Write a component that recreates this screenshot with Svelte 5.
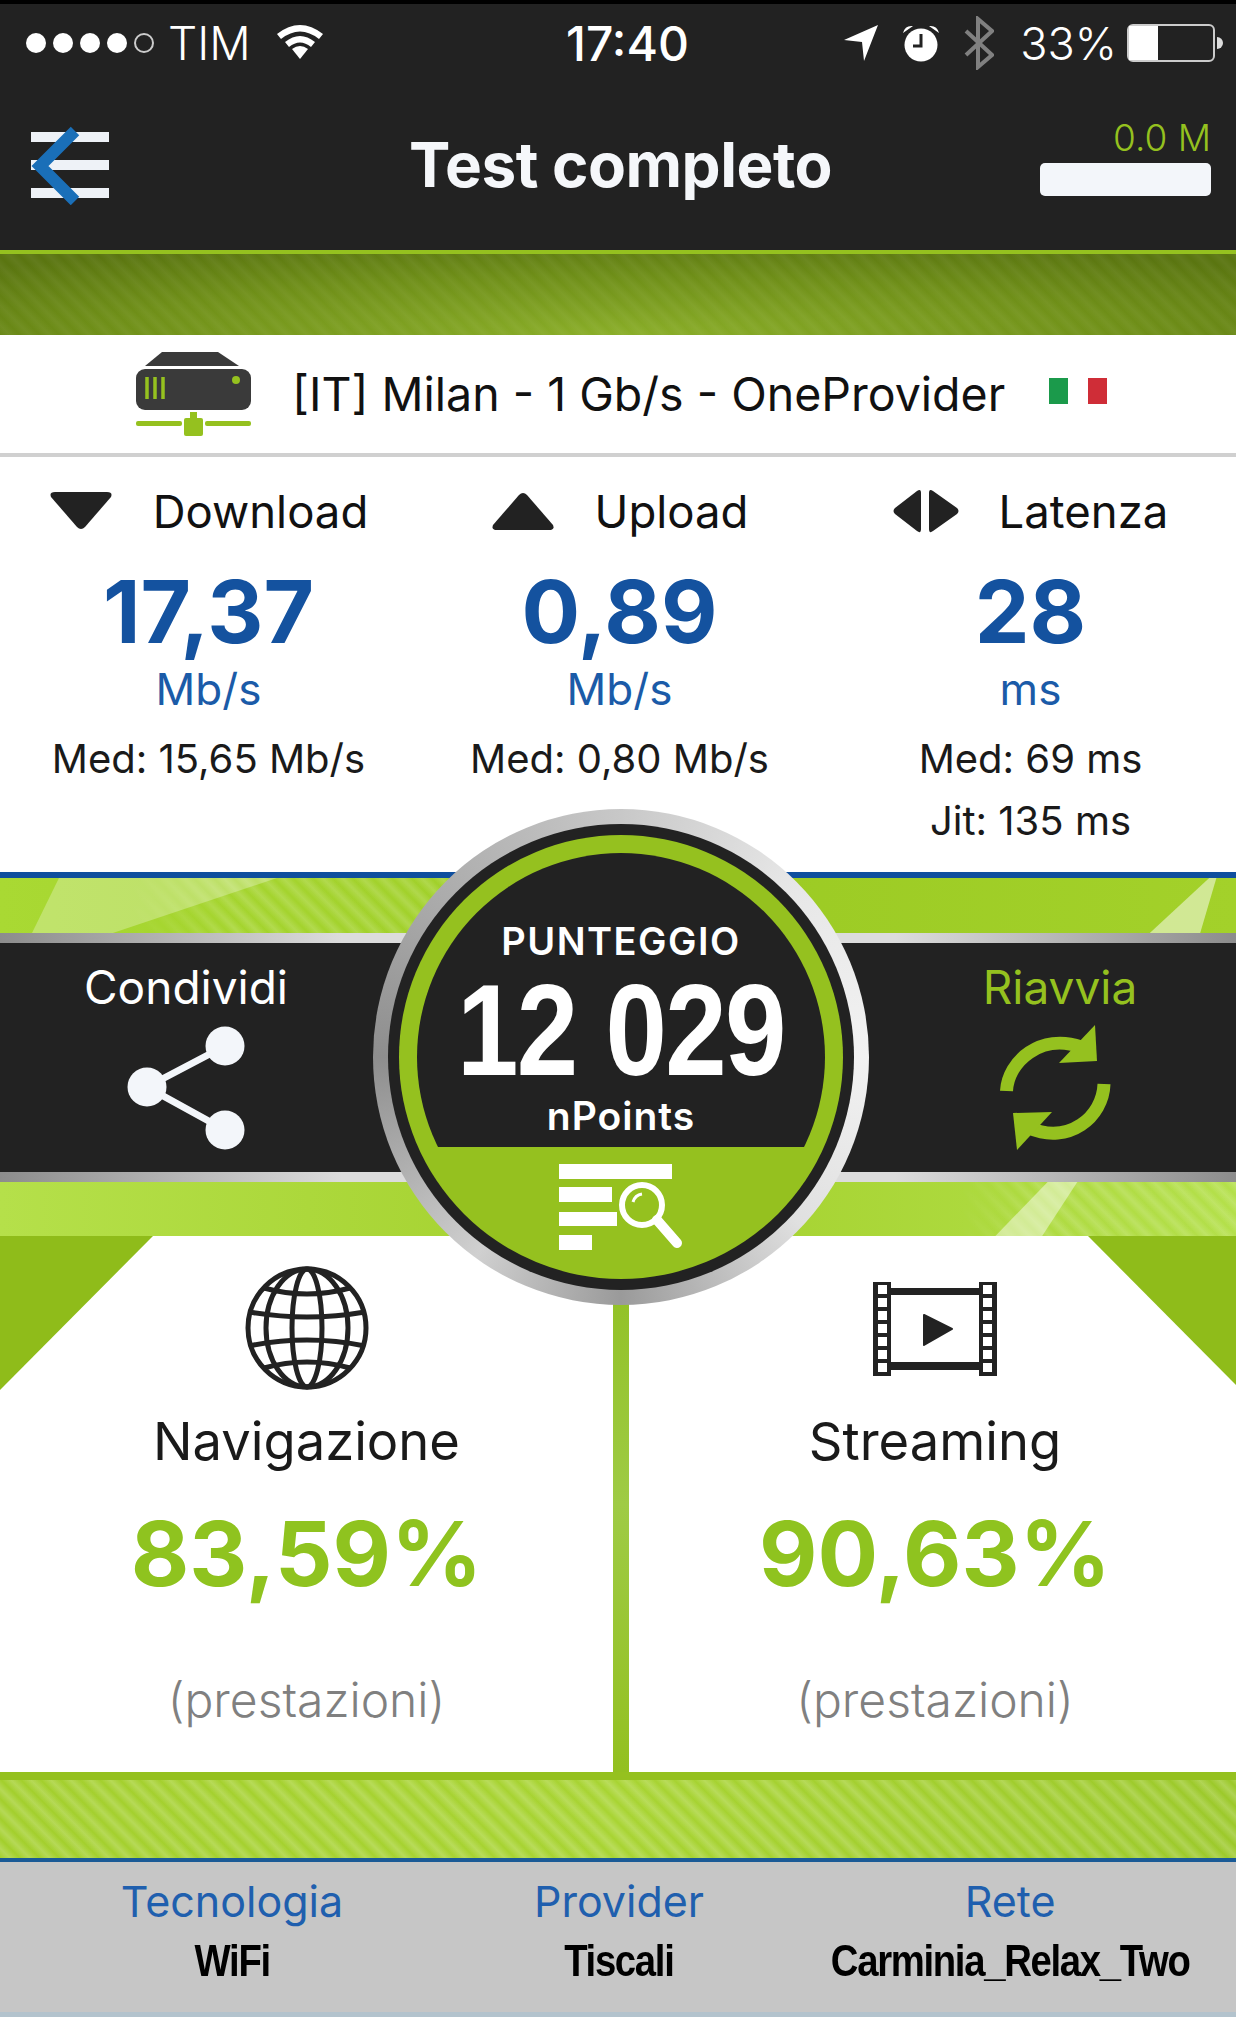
<script>
  const metrics = [
    { label: 'Download', icon: 'down', value: '17,37', unit: 'Mb/s', notes: ['Med: 15,65 Mb/s'] },
    { label: 'Upload', icon: 'up', value: '0,89', unit: 'Mb/s', notes: ['Med: 0,80 Mb/s'] },
    { label: 'Latenza', icon: 'both', value: '28', unit: 'ms', notes: ['Med: 69 ms', 'Jit: 135 ms'] }
  ];
  const info = [
    { label: 'Tecnologia', value: 'WiFi' },
    { label: 'Provider', value: 'Tiscali' },
    { label: 'Rete', value: 'Carminia_Relax_Two' }
  ];
</script>

<div class="page">
  <header class="top">
    <div class="status">
      <div class="status-left">
        <div class="dots">
          <span class="dot"></span><span class="dot"></span><span class="dot"></span><span class="dot"></span><span class="dot empty"></span>
        </div>
        <span class="carrier">TIM</span>
        <svg class="wifi" viewBox="0 0 48 36" width="48" height="36">
          <path d="M1 11 Q24 -7 47 11 L43 16 Q24 1 5 16 Z" fill="#fff" />
          <path d="M9 19 Q24 7 39 19 L35 24 Q24 15 13 24 Z" fill="#fff" />
          <path d="M16 26 Q24 20 32 26 L24 36 Z" fill="#fff" />
        </svg>
      </div>
      <span class="clock">17:40</span>
      <div class="status-right">
        <svg viewBox="0 0 34 36" width="34" height="36"><path d="M34 0 L20 36 L18 17 L0 15 Z" fill="#fff" /></svg>
        <svg class="alarm" viewBox="0 0 38 38" width="38" height="38">
          <circle cx="19" cy="21" r="16.5" fill="#fff" />
          <path d="M1 9 Q3 1 11 2 Z M37 9 Q35 1 27 2 Z" fill="#fff" />
          <path d="M19 10 V22 H11" fill="none" stroke="#222" stroke-width="3" />
        </svg>
        <svg class="bt" viewBox="0 0 30 54" width="30" height="54">
          <path d="M2 15 L28 39 L14 51 V3 L28 15 L2 39" fill="none" stroke="#808080" stroke-width="4" />
        </svg>
        <span class="percent">33%</span>
        <div class="battery"><span class="battery-fill"></span></div>
      </div>
    </div>
    <div class="nav">
      <button class="menu" aria-label="Indietro">
        <span class="bar"></span><span class="bar"></span><span class="bar"></span>
        <svg class="chevron" viewBox="0 0 50 80" width="50" height="80">
          <path d="M44 6 L9 41 L44 76" fill="none" stroke="#1a6fb8" stroke-width="12" />
        </svg>
      </button>
      <h1>Test completo</h1>
      <div class="usage">
        <span>0.0 M</span>
        <div class="usage-bar"></div>
      </div>
    </div>
  </header>

  <div class="band-dark"></div>

  <div class="server">
    <svg class="server-icon" viewBox="0 0 117 84" width="117" height="84">
      <path d="M27 0 H83 L104 14 H10 Z" fill="#3a3a3a" />
      <rect x="1" y="17" width="115" height="41" rx="9" fill="#3a3a3a" />
      <path d="M12 25 V47 M20 25 V47 M28 25 V47" stroke="#95c11f" stroke-width="3.5" />
      <circle cx="101" cy="28" r="4" fill="#95c11f" />
      <rect x="1" y="69" width="46" height="5" rx="2" fill="#95c11f" />
      <rect x="70" y="69" width="46" height="5" rx="2" fill="#95c11f" />
      <rect x="55" y="60" width="7" height="10" fill="#95c11f" />
      <rect x="49" y="66" width="19" height="18" rx="2" fill="#95c11f" />
    </svg>
    <span class="server-name">[IT] Milan - 1 Gb/s - OneProvider</span>
    <div class="flag"><span class="green"></span><span class="red"></span></div>
  </div>

  <section class="metrics">
    {#each metrics as m}
      <div class="metric">
        <div class="metric-head">
          {#if m.icon === 'down'}
            <svg viewBox="0 0 64 40" width="64" height="40"><path d="M6 1 H58 Q64 1 62 6 L36 36 Q32 40 28 36 L2 6 Q0 1 6 1 Z" fill="#222" /></svg>
          {:else if m.icon === 'up'}
            <svg viewBox="0 0 64 40" width="64" height="40"><path d="M6 39 H58 Q64 39 62 34 L36 4 Q32 0 28 4 L2 34 Q0 39 6 39 Z" fill="#222" /></svg>
          {:else}
            <svg viewBox="0 0 66 46" width="66" height="46">
              <path d="M28 5 V41 Q28 46 24 43 L2 26 Q-1 23 2 20 L24 3 Q28 0 28 5 Z" fill="#222" />
              <path d="M36 5 V41 Q36 46 40 43 L64 26 Q67 23 64 20 L40 3 Q36 0 36 5 Z" fill="#222" />
            </svg>
          {/if}
          <span>{m.label}</span>
        </div>
        <div class="metric-value">{m.value}</div>
        <div class="metric-unit">{m.unit}</div>
        {#each m.notes as note}
          <div class="metric-note">{note}</div>
        {/each}
      </div>
    {/each}
  </section>

  <section class="score">
    <div class="score-top">
      <span class="stripes left"></span>
      <span class="swoosh a"></span>
      <span class="swoosh b"></span>
    </div>
    <div class="score-strip">
      <div class="action">
        <span>Condividi</span>
        <svg viewBox="0 0 120 126" width="120" height="126">
          <path d="M99 21 L21 62 L99 105" fill="none" stroke="#f3f6fa" stroke-width="7" />
          <circle cx="99" cy="21" r="19.5" fill="#f3f6fa" />
          <circle cx="21" cy="62" r="19.5" fill="#f3f6fa" />
          <circle cx="99" cy="105" r="19.5" fill="#f3f6fa" />
        </svg>
      </div>
      <div class="action restart">
        <span>Riavvia</span>
        <svg viewBox="0 0 112 126" width="112" height="126">
          <path d="M7.5 66 C9 36 42 8 82 22" fill="none" stroke="#95c11f" stroke-width="13" />
          <path d="M96 0 L98 36 L60 38 Z" fill="#95c11f" />
          <path d="M105 59 C104 92 70 120 30 103" fill="none" stroke="#95c11f" stroke-width="13" />
          <path d="M18 125 L14 88 L53 87 Z" fill="#95c11f" />
        </svg>
      </div>
    </div>
    <div class="score-bottom">
      <span class="stripes right"></span>
      <span class="swoosh c"></span>
    </div>

    <div class="badge">
      <div class="badge-dark">
        <div class="badge-green">
          <div class="badge-inner">
            <span class="badge-title">PUNTEGGIO</span>
            <span class="badge-score">12 029</span>
            <span class="badge-unit">nPoints</span>
            <svg class="badge-icon" viewBox="0 0 124 88" width="124" height="88">
              <path d="M0 0 H113 V15 H0 Z M0 23 H53 V38 H0 Z M0 48 H58 V62 H0 Z M0 71 H33 V86 H0 Z" fill="#fff" />
              <circle cx="83" cy="41" r="20" fill="none" stroke="#fff" stroke-width="6" />
              <path d="M98 56 L118 79" stroke="#fff" stroke-width="10" stroke-linecap="round" />
              <path d="M74 38 Q76 31 83 30" fill="none" stroke="#fff" stroke-width="3" />
            </svg>
          </div>
        </div>
      </div>
    </div>
  </section>

  <section class="cards">
    <article class="card left">
      <svg class="card-icon" viewBox="0 0 124 124" width="124" height="124">
        <g fill="none" stroke="#222" stroke-width="5">
          <circle cx="62" cy="62" r="59" />
          <ellipse cx="62" cy="62" rx="15" ry="59" />
          <ellipse cx="62" cy="62" rx="41" ry="59" />
          <path d="M19 22 Q62 34 105 22" />
          <path d="M4 46 Q62 56 120 46" />
          <path d="M4 80 Q62 68 120 80" />
          <path d="M19 102 Q62 90 105 102" />
        </g>
      </svg>
      <h2>Navigazione</h2>
      <div class="card-value">83,59%</div>
      <div class="card-note">(prestazioni)</div>
    </article>
    <div class="divider"></div>
    <article class="card right">
      <svg class="card-icon film" viewBox="0 0 124 94" width="124" height="94">
        <rect width="18" height="94" fill="#222" />
        <rect x="106" width="18" height="94" fill="#222" />
        <rect x="18" y="6" width="88" height="7" fill="#222" />
        <rect x="18" y="80" width="88" height="8" fill="#222" />
        {#each [3, 16, 29, 42, 55, 68, 81] as y}
          <rect x="5" {y} width="9" height="9" fill="#fff" />
          <rect x="110" {y} width="9" height="9" fill="#fff" />
        {/each}
        <path d="M51 33 L79 47 L51 63 Z" fill="#222" stroke="#222" stroke-width="2" stroke-linejoin="round" />
      </svg>
      <h2>Streaming</h2>
      <div class="card-value">90,63%</div>
      <div class="card-note">(prestazioni)</div>
    </article>
  </section>

  <div class="band-light"></div>

  <footer class="info">
    {#each info as item}
      <div class="info-item">
        <span class="info-label">{item.label}</span>
        <span class="info-value">{item.value}</span>
      </div>
    {/each}
  </footer>
  <div class="edge"></div>
</div>

<style>
  :global(body) {
    margin: 0;
    background: #fff;
  }

  .page {
    width: 1236px;
    height: 2017px;
    overflow: hidden;
    font-family: Inter, sans-serif;
    display: flex;
    flex-direction: column;
  }

  .top {
    height: 250px;
    box-sizing: border-box;
    background: #222;
    border-top: 4px solid #000;
    color: #fff;
  }

  .status {
    height: 78px;
    padding: 0 21px 0 26px;
    display: grid;
    grid-template-columns: 1fr auto 1fr;
    align-items: center;
    font-size: 46px;
  }

  .status-left,
  .status-right {
    display: flex;
    align-items: center;
  }

  .status-right {
    justify-content: flex-end;
    gap: 24px;
  }

  .dots {
    display: flex;
    gap: 7px;
  }

  .dot {
    width: 20px;
    height: 20px;
    border-radius: 50%;
    background: #fff;
  }

  .dot.empty {
    box-sizing: border-box;
    background: none;
    border: 2px solid #ccc;
  }

  .carrier {
    font-weight: 300;
    margin-left: 14px;
  }

  .wifi {
    margin-left: 25px;
    margin-top: -4px;
  }

  .clock {
    margin-left: 14px;
    font-size: 48px;
    font-weight: 500;
  }

  .percent {
    font-size: 45px;
    font-weight: 300;
    margin-left: 2px;
    margin-right: -14px;
  }

  .battery {
    position: relative;
    width: 88px;
    height: 38px;
    box-sizing: border-box;
    border: 2px solid #ccc;
    border-radius: 6px;
  }

  .battery::after {
    content: "";
    position: absolute;
    left: 88px;
    top: 11px;
    width: 6px;
    height: 12px;
    border-radius: 0 6px 6px 0;
    background: #ddd;
  }

  .battery-fill {
    display: block;
    width: 29px;
    height: 100%;
    background: #fff;
  }

  .nav {
    height: 168px;
    padding: 0 25px 0 31px;
    display: flex;
    align-items: center;
    justify-content: space-between;
    position: relative;
  }

  .menu {
    position: relative;
    width: 78px;
    height: 66px;
    margin-top: -3px;
    padding: 0;
    border: 0;
    background: none;
    display: flex;
    flex-direction: column;
    justify-content: space-between;
  }

  .bar {
    height: 10px;
    background: #eef2f7;
  }

  .chevron {
    position: absolute;
    left: 0;
    top: -7px;
  }

  h1 {
    margin: -4px 0 0 92px;
    font-size: 62px;
    font-weight: 700;
    letter-spacing: -0.5px;
    color: #f5f7fa;
  }

  .usage {
    width: 171px;
    display: flex;
    flex-direction: column;
    align-items: flex-end;
    gap: 7px;
    margin-top: -17px;
    font-size: 37px;
    font-weight: 300;
    line-height: 36px;
    color: #95c11f;
  }

  .usage-bar {
    width: 100%;
    height: 33px;
    border-radius: 5px;
    background: #f3f6fa;
  }

  .band-dark {
    height: 85px;
    box-sizing: border-box;
    border-top: 4px solid #95c11f;
    background:
      repeating-linear-gradient(45deg, transparent 0, rgba(255, 255, 255, 0.05) 7px, transparent 14px),
      radial-gradient(ellipse 70% 120% at 50% 100%, #8aae28 0%, #6f8f18 60%, #5a7510 100%);
  }

  .server {
    height: 122px;
    box-sizing: border-box;
    border-bottom: 4px solid #d0d0d0;
    padding-left: 135px;
    display: flex;
    align-items: center;
    background: #fff;
  }

  .server-name {
    margin-left: 40px;
    font-size: 46.5px;
    color: #111;
  }

  .flag {
    margin-left: 44px;
    display: flex;
    gap: 20px;
    margin-top: -6px;
  }

  .flag span {
    width: 19px;
    height: 26px;
  }

  .green {
    background: #1b9a4b;
  }

  .red {
    background: #cf2d37;
  }

  .metrics {
    height: 415px;
    box-sizing: border-box;
    padding: 24px 0 0 3px;
    display: grid;
    grid-template-columns: repeat(3, 1fr);
    background: #fff;
  }

  .metric {
    display: flex;
    flex-direction: column;
    align-items: center;
    color: #1a1a1a;
  }

  .metric-head {
    display: flex;
    align-items: center;
    gap: 40px;
    height: 60px;
    font-size: 45.5px;
    color: #111;
  }

  .metric-value {
    margin-top: 23px;
    height: 93px;
    line-height: 96px;
    font-size: 87px;
    font-weight: 700;
    color: #14529f;
  }

  .metric-unit {
    height: 71px;
    line-height: 64px;
    font-size: 44px;
    color: #1b5ba8;
  }

  .metric-note {
    height: 62px;
    line-height: 62px;
    font-size: 40px;
  }

  .score {
    position: relative;
    z-index: 2;
    height: 364px;
    box-sizing: border-box;
    border-top: 6px solid #0f4f9e;
    display: flex;
    flex-direction: column;
  }

  .score-top {
    position: relative;
    height: 55px;
    overflow: hidden;
    background: linear-gradient(90deg, #a9d933, #9ccb24 60%, #a3d12a);
  }

  .score-bottom {
    position: relative;
    height: 54px;
    overflow: hidden;
    background: linear-gradient(90deg, #b5e04a, #a3d02c 50%, #b4e04a);
  }

  .stripes {
    position: absolute;
    top: 0;
    bottom: 0;
    background: repeating-linear-gradient(45deg, transparent 0, rgba(255, 255, 255, 0.16) 7px, transparent 14px);
  }

  .stripes.left {
    left: 130px;
    width: 340px;
    mask-image: linear-gradient(90deg, transparent, #000 30%);
  }

  .stripes.right {
    left: 960px;
    right: 0;
    mask-image: linear-gradient(90deg, transparent, #000 30%);
  }

  .swoosh {
    position: absolute;
    top: 0;
    bottom: 0;
    background: rgba(255, 255, 255, 0.28);
  }

  .swoosh.a {
    left: 32px;
    width: 245px;
    clip-path: polygon(11% 0, 100% 0, 33% 100%, 0 100%);
  }

  .swoosh.b {
    left: 1130px;
    width: 90px;
    background: rgba(255, 255, 255, 0.5);
    clip-path: polygon(88% 0, 96% 0, 78% 100%, 22% 100%);
  }

  .swoosh.c {
    left: 990px;
    width: 90px;
    background: rgba(255, 255, 255, 0.45);
    clip-path: polygon(64% 0, 97% 0, 58% 100%, 6% 100%);
  }

  .score-strip {
    height: 249px;
    box-sizing: border-box;
    padding: 0 100px 0 84px;
    border-top: 10px solid #b4b4b4;
    border-bottom: 10px solid #b4b4b4;
    border-image: linear-gradient(90deg, #8a8a8a, #dcdcdc 28%, #dcdcdc 72%, #8a8a8a) 10;
    background: #222;
    display: flex;
    justify-content: space-between;
  }

  .action {
    width: 204px;
    display: flex;
    flex-direction: column;
    align-items: center;
    padding-top: 18px;
    gap: 12px;
    font-size: 46px;
    font-weight: 400;
    line-height: 52px;
    color: #fff;
  }

  .action.restart {
    color: #95c11f;
    width: 152px;
  }

  .restart svg {
    margin-left: -10px;
  }

  .badge {
    position: absolute;
    left: 373px;
    top: -69px;
    width: 496px;
    height: 496px;
    padding: 15px;
    box-sizing: border-box;
    border-radius: 50%;
    background: conic-gradient(#c8c8c8, #e6e6e6 12%, #f2f2f2 25%, #e0e0e0 37%, #9a9a9a 50%, #d0d0d0 60%, #8e8e8e 75%, #a8a8a8 85%, #c8c8c8);
  }

  .badge-dark {
    height: 100%;
    box-sizing: border-box;
    padding: 11px;
    border-radius: 50%;
    background: #222;
  }

  .badge-green {
    height: 100%;
    box-sizing: border-box;
    padding: 18px;
    border-radius: 50%;
    background: #95c11f;
  }

  .badge-inner {
    height: 100%;
    border-radius: 50%;
    overflow: hidden;
    display: flex;
    flex-direction: column;
    align-items: center;
    color: #fff;
    background: linear-gradient(#222 0 294px, #95c11f 294px);
  }

  .badge-title {
    margin-top: 66px;
    font-size: 38px;
    line-height: 44px;
    font-weight: 600;
    letter-spacing: 1.5px;
  }

  .badge-score {
    margin-top: 4px;
    font-family: "Liberation Sans", sans-serif;
    font-size: 130px;
    line-height: 127px;
    font-weight: 700;
    letter-spacing: -2px;
    transform: scaleX(0.85);
  }

  .badge-unit {
    margin-top: 0;
    font-size: 39px;
    line-height: 44px;
    font-weight: 600;
    letter-spacing: 1px;
  }

  .badge-icon {
    flex-shrink: 0;
    margin-top: 26px;
  }

  .cards {
    height: 536px;
    display: flex;
    background: #fff;
  }

  .card {
    position: relative;
    flex: 1;
    box-sizing: border-box;
    display: flex;
    flex-direction: column;
    align-items: center;
    padding-top: 30px;
  }

  .card.left {
    flex: 0 0 613px;
  }

  .card.right {
    padding-left: 5px;
  }

  .card::before {
    content: "";
    position: absolute;
    top: 0;
    width: 153px;
    height: 154px;
    background: #8fbc1a;
  }

  .card.left::before {
    left: 0;
    clip-path: polygon(0 0, 100% 0, 0 100%);
  }

  .card.right::before {
    right: 0;
    width: 148px;
    height: 149px;
    clip-path: polygon(0 0, 100% 0, 100% 100%);
  }

  .card-icon {
    display: block;
  }

  .film {
    margin: 16px 0 14px;
  }

  .divider {
    width: 16px;
    background: linear-gradient(#8fbf1e, #9fcb45 50%, #93c020);
  }

  h2 {
    margin: 19px 0 0;
    height: 64px;
    line-height: 64px;
    font-size: 52.5px;
    font-weight: 400;
    color: #1a1a1a;
  }

  .card-value {
    margin-top: 26px;
    height: 110px;
    line-height: 110px;
    font-size: 90px;
    font-weight: 700;
    color: #8fc31f;
  }

  .card-note {
    margin-top: 64px;
    height: 54px;
    line-height: 54px;
    font-size: 48px;
    font-weight: 300;
    color: #808080;
  }

  .band-light {
    height: 90px;
    box-sizing: border-box;
    border-top: 8px solid #95c11f;
    border-bottom: 4px solid #1a5a96;
    background:
      repeating-linear-gradient(45deg, transparent 0, rgba(255, 255, 255, 0.2) 7px, transparent 14px),
      linear-gradient(90deg, #a3cf2c, #a8d432 50%, #9cc92a);
  }

  .info {
    height: 150px;
    padding: 10px 22px 0 30px;
    box-sizing: border-box;
    background: #c6c6c6;
    display: grid;
    grid-template-columns: 404px 370px 1fr;
    text-align: center;
  }

  .info-item {
    display: flex;
    flex-direction: column;
    align-items: center;
  }

  .info-label {
    height: 58px;
    line-height: 58px;
    font-size: 43px;
    font-weight: 400;
    color: #1f5fae;
  }

  .info-value {
    height: 58px;
    line-height: 62px;
    font-family: "Liberation Sans", sans-serif;
    font-size: 44px;
    font-weight: 700;
    letter-spacing: -1.5px;
    transform: scaleX(0.87);
    color: #000;
  }

  .edge {
    flex: 1;
    background: #b3c3cd;
  }
</style>
